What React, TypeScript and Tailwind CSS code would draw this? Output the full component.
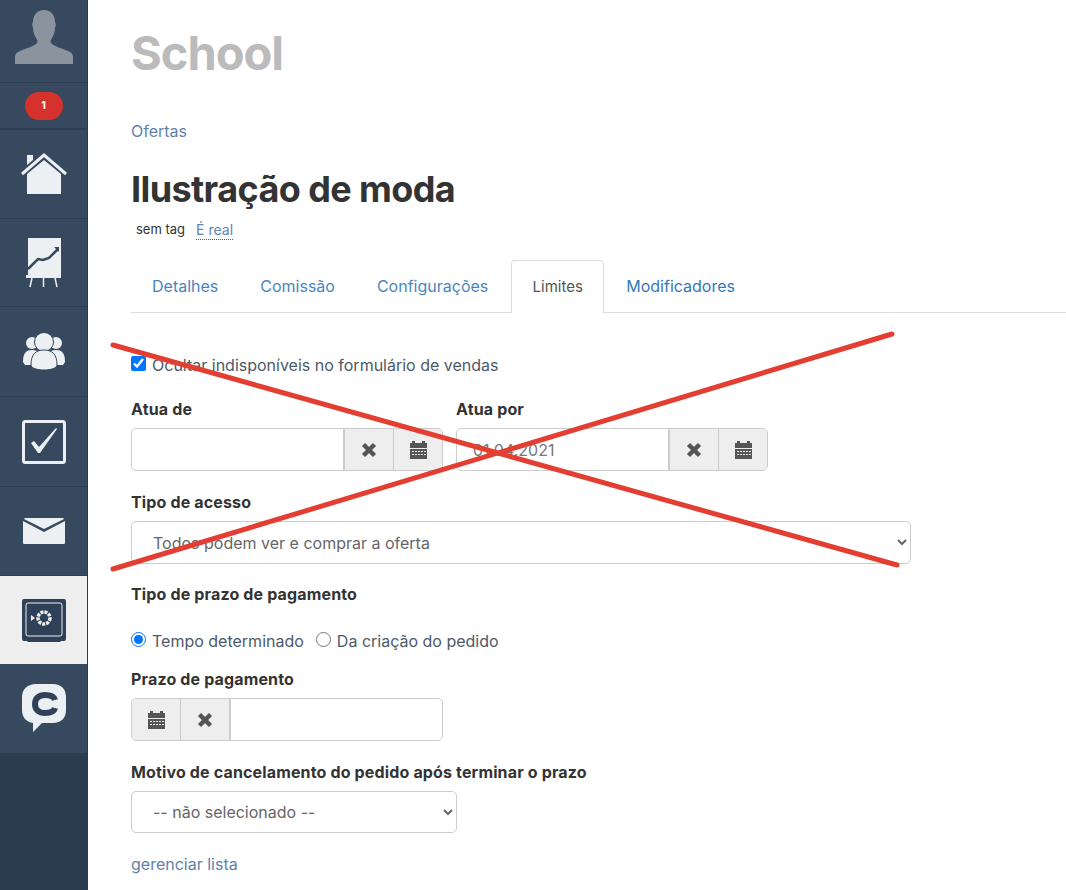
const iconColor = "#edf0f2";

function UserIcon() {
  return (
    <svg width="60" height="58" viewBox="0 0 60 58">
      <path
        d="M1 56v-7c0-3 2-5 5-6 6-3 13-4 17-8 1-2 0-4-1-5-2-3-3-7-3-10-1-2-1-5 0-6 0-7 4-12 11-12s11 5 11 12c1 2 1 4 0 6 0 3-1 7-3 10-1 2-2 3-1 5 4 4 11 5 17 8 3 1 5 3 5 6v7z"
        fill="#8b939e"
      />
    </svg>
  );
}

function HomeIcon() {
  return (
    <svg width="46" height="44" viewBox="0 0 46 44">
      <path d="M6 3h6v5l-6 5z" fill={iconColor} />
      <path d="M1 22 23 3l22 19" fill="none" stroke={iconColor} strokeWidth="3" />
      <path d="M6 22 23 8l17 14v20H6z" fill={iconColor} />
    </svg>
  );
}

function ChartIcon() {
  return (
    <svg width="36" height="50" viewBox="0 0 36 50">
      <rect x="2" y="0" width="33" height="38" fill={iconColor} />
      <path d="M2 31 12 21l5 1 6-2 9-9" fill="none" stroke="#36495e" strokeWidth="2.500" />
      <path d="M28 9h5v5z" fill="#36495e" />
      <rect x="0" y="37" width="35" height="3" fill={iconColor} />
      <path d="M6 40 4 49M17.500 40v9M29 40l2 9" fill="none" stroke={iconColor} strokeWidth="1.500" />
    </svg>
  );
}

function UsersIcon() {
  return (
    <svg width="44" height="40" viewBox="0 0 44 40">
      <circle cx="10" cy="11" r="6" fill={iconColor} />
      <circle cx="34" cy="11" r="6" fill={iconColor} />
      <path d="M1 30c0-9 3-12 9-12s9 3 9 12l-2 3H3zM25 30c0-9 3-12 9-12s9 3 9 12l-2 3H27z" fill={iconColor} />
      <circle cx="22" cy="10" r="9.500" fill={iconColor} stroke="#36495e" strokeWidth="1" />
      <path d="M9 33c0-10 4-15 13-15s13 5 13 15c0 3-6 5-13 5S9 36 9 33z" fill={iconColor} stroke="#36495e" strokeWidth="1" />
    </svg>
  );
}

function CheckIcon() {
  return (
    <svg width="44" height="44" viewBox="0 0 44 44">
      <rect x="1.500" y="1.500" width="41" height="41" rx="2" fill="none" stroke={iconColor} strokeWidth="3" />
      <path d="M9 23l3-2 5 6L34 8l1 1-17 24h-2z" fill={iconColor} />
    </svg>
  );
}

function MailIcon() {
  return (
    <svg width="42" height="26" viewBox="0 0 42 26">
      <path d="M0 3 21 14 42 3v22a1 1 0 0 1-1 1H1a1 1 0 0 1-1-1z" fill={iconColor} />
      <path d="M2 0h38l1 1-20 10L1 1z" fill={iconColor} />
    </svg>
  );
}

function SafeIcon() {
  return (
    <svg width="44" height="43" viewBox="0 0 44 43">
      <path d="M2 0h40a2 2 0 0 1 2 2v38a2 2 0 0 1-2 2h-3l-1 1H6l-1-1H2a2 2 0 0 1-2-2V2a2 2 0 0 1 2-2z" fill="#2f4159" />
      <rect x="4" y="4" width="36" height="33" rx="2" fill="none" stroke="#eeeeee" strokeWidth="1" />
      <circle cx="22" cy="19" r="6" fill="none" stroke="#eeeeee" strokeWidth="3.500" strokeDasharray="3 1" />
      <path d="M9 16l4 3-4 3z" fill="#eeeeee" />
    </svg>
  );
}

function ChatIcon() {
  return (
    <svg width="44" height="49" viewBox="0 0 44 49">
      <path
        d="M14 0h17c8 0 13 5 13 13v13c0 8-5 13-13 13H20l-9 9v-9C4 38 0 33 0 26V13C0 5 6 0 14 0z"
        fill={iconColor}
      />
      <path d="M33 16c-1-4-5-5-10-5-6 0-10 3-10 9s4 9 10 9c5 0 9-1 10-5" fill="none" stroke="#2f4159" strokeWidth="6" />
    </svg>
  );
}

function CrossIcon() {
  return (
    <svg width="16" height="16" viewBox="0 0 16 16">
      <path d="M2.500 2.500 13.500 13.500M13.500 2.500 2.500 13.500" fill="none" stroke="#555555" strokeWidth="4.500" />
    </svg>
  );
}

function CalendarIcon() {
  return (
    <svg width="17" height="18" viewBox="0 0 17 18" fill="#555555">
      <path d="M2 0h3v2h7V0h3v2h2v5H0V2h2z" />
      <path
        fillRule="evenodd"
        d="M0 8h17v10H0zM2 10v1h2v-1zM5 10v1h2v-1zM8 10v1h2v-1zM11 10v1h2v-1zM14 10v1h2v-1zM2 13v1h2v-1zM5 13v1h2v-1zM8 13v1h2v-1zM11 13v1h2v-1zM14 13v1h2v-1z"
      />
    </svg>
  );
}

const navItems = [
  { h: "h-[89px]", icon: <HomeIcon /> },
  { h: "h-[88px]", icon: <ChartIcon /> },
  { h: "h-[90px]", icon: <UsersIcon /> },
  { h: "h-[90px]", icon: <CheckIcon /> },
  { h: "h-[89px]", icon: <MailIcon /> },
];

function Sidebar() {
  return (
    <aside className="w-[88px] shrink-0 bg-[#2c3c4f] border-r border-[#2b3a4c] flex flex-col">
      <div className="h-[83px] bg-[#36495e] border-b border-[#2d3e50] flex items-start justify-center pt-[8px]">
        <UserIcon />
      </div>
      <div className="h-[47px] bg-[#36495e] border-b-2 border-[#2d3e50] flex items-center justify-center">
        <span className="w-[38px] h-[28px] rounded-[14px] bg-[#d6322d] text-white text-[11px] font-bold flex items-center justify-center">1</span>
      </div>
      {navItems.map((item, i) => (
        <div key={i} className={`${item.h} bg-[#36495e] border-b border-[#2d3e50] flex items-center justify-center`}>
          {item.icon}
        </div>
      ))}
      <div className="h-[88px] bg-[#eeeeee] flex items-center justify-center">
        <SafeIcon />
      </div>
      <div className="h-[89px] bg-[#36495e] flex items-center justify-center">
        <ChatIcon />
      </div>
    </aside>
  );
}

function IconBtn({ children, left }: { children: React.ReactNode; left?: boolean }) {
  return (
    <button
      type="button"
      className={`w-[49px] h-full bg-[#eeeeee] flex items-center justify-center border-[#cccccc] ${left ? "border-r" : "border-l"}`}
    >
      {children}
    </button>
  );
}

function DateField({ value, width }: { value?: string; width: string }) {
  return (
    <div className={`${width} h-[43px] flex border border-[#cccccc] rounded-[5px] overflow-hidden`}>
      <input
        defaultValue={value}
        className="flex-1 min-w-0 px-[16px] text-[16px] text-[#777777] outline-none border-r border-[#cccccc]"
      />
      <IconBtn><CrossIcon /></IconBtn>
      <IconBtn><CalendarIcon /></IconBtn>
    </div>
  );
}

const tabs = ["Detalhes", "Comissão", "Configurações"];
const labelCls = "font-bold leading-[24px] tracking-[0.15px]";

export default function App() {
  return (
    <div className="relative flex h-[890px] w-[1066px] overflow-hidden bg-white font-['Inter','Lato',sans-serif] text-[16px] text-[#333333]">
      <Sidebar />
      <main className="flex-1 min-w-0 pl-[43px]">
        <h2 className="mt-[23px] text-[47px] leading-[60px] font-bold tracking-[-1px] text-[#bbbbbb]">School</h2>
        <a className="block mt-[38px] leading-[20px] text-[#5f82a8]">Ofertas</a>
        <h1 className="mt-[26px] text-[36px] leading-[44px] font-bold tracking-[-0.6px] text-[#333333]">Ilustração de moda</h1>
        <div className="mt-[7px] flex items-center h-[24px] pl-[5px] text-[13px]">
          <span className="text-[#333333]">sem tag</span>
          <span className="ml-[11px] text-[14px] text-[#5f82b8] border-b border-dotted border-[#2f5f9f] leading-[18px]">É real</span>
        </div>
        <nav className="mt-[18px] h-[53px] flex border-b border-[#dddddd]">
          {tabs.map((t) => (
            <span key={t} className="px-[21px] h-[52px] flex items-center text-[#4a86bd]">{t}</span>
          ))}
          <span className="ml-[2px] w-[93px] h-[53px] flex items-center justify-center text-[15px] text-[#555555] bg-white border border-b-0 border-[#dddddd] rounded-t-[4px]">Limites</span>
          <span className="px-[22px] h-[52px] flex items-center text-[#337ab7]">Modificadores</span>
        </nav>

        <label className="mt-[40px] flex items-center h-[24px] gap-[6px] text-[#4d5a68]">
          <input type="checkbox" defaultChecked className="w-[15px] h-[15px] m-0 -mt-[4px]" />
          Ocultar indisponíveis no formulário de vendas
        </label>

        <div className="mt-[20px] flex gap-[13px]">
          <div>
            <div className={`${labelCls} mb-[7px]`}>Atua de</div>
            <DateField width="w-[312px]" />
          </div>
          <div>
            <div className={`${labelCls} mb-[7px]`}>Atua por</div>
            <DateField width="w-[312px]" value="01.04.2021" />
          </div>
        </div>

        <div className={`mt-[19px] ${labelCls}`}>Tipo de acesso</div>
        <select className="mt-[7px] block w-[780px] h-[43px] pl-[17px] pr-[8px] border border-[#cccccc] rounded-[5px] text-[#666666] bg-white">
          <option>Todos podem ver e comprar a oferta</option>
        </select>

        <div className={`mt-[18px] ${labelCls}`}>Tipo de prazo de pagamento</div>

        <div className="mt-[23px] flex items-center h-[24px] text-[#4d5a68]">
          <input type="radio" name="prazo" defaultChecked className="w-[15px] h-[15px] m-0 -mt-[4px]" />
          <span className="ml-[6px]">Tempo determinado</span>
          <input type="radio" name="prazo" className="w-[15px] h-[15px] m-0 -mt-[4px] ml-[12px]" />
          <span className="ml-[6px]">Da criação do pedido</span>
        </div>

        <div className={`mt-[14px] ${labelCls}`}>Prazo de pagamento</div>
        <div className="mt-[7px] w-[312px] h-[43px] flex border border-[#cccccc] rounded-[5px] overflow-hidden">
          <IconBtn left><CalendarIcon /></IconBtn>
          <IconBtn left><CrossIcon /></IconBtn>
          <input className="flex-1 min-w-0 px-[16px] outline-none border-l border-[#cccccc]" />
        </div>

        <div className={`mt-[19px] ${labelCls}`}>Motivo de cancelamento do pedido após terminar o prazo</div>
        <select className="mt-[7px] block w-[326px] h-[42px] pl-[17px] pr-[8px] border border-[#cccccc] rounded-[5px] text-[#666666] bg-white">
          <option>-- não selecionado --</option>
        </select>

        <a className="block mt-[21px] leading-[20px] text-[#5f82a8]">gerenciar lista</a>
      </main>

      {/* red cross drawn on top of the form */}
      <svg className="absolute left-0 top-0 pointer-events-none" width="1066" height="890">
        <path d="M113 345 897 565M113 569 892 334" stroke="#e33e31" strokeWidth="5" strokeLinecap="round" fill="none" />
      </svg>
    </div>
  );
}
